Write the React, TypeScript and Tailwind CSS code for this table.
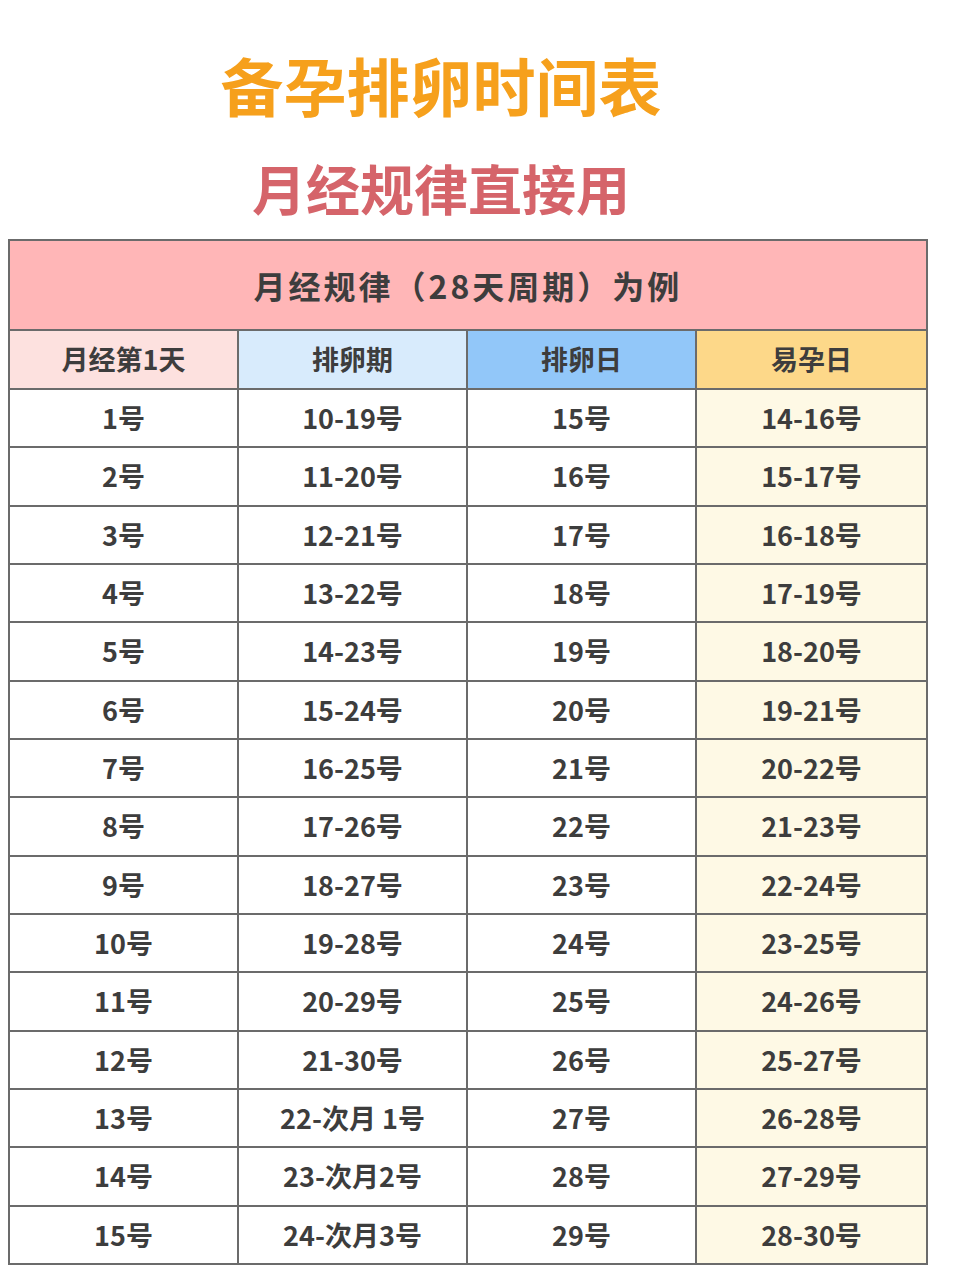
const rows: [string, string, string, string][] = [
  ['1号', '10-19号', '15号', '14-16号'],
  ['2号', '11-20号', '16号', '15-17号'],
  ['3号', '12-21号', '17号', '16-18号'],
  ['4号', '13-22号', '18号', '17-19号'],
  ['5号', '14-23号', '19号', '18-20号'],
  ['6号', '15-24号', '20号', '19-21号'],
  ['7号', '16-25号', '21号', '20-22号'],
  ['8号', '17-26号', '22号', '21-23号'],
  ['9号', '18-27号', '23号', '22-24号'],
  ['10号', '19-28号', '24号', '23-25号'],
  ['11号', '20-29号', '25号', '24-26号'],
  ['12号', '21-30号', '26号', '25-27号'],
  ['13号', '22-次月 1号', '27号', '26-28号'],
  ['14号', '23-次月2号', '28号', '27-29号'],
  ['15号', '24-次月3号', '29号', '28-30号'],
]

const font = { fontFamily: '"Noto Sans CJK SC", "Noto Sans", sans-serif' }

export default function App() {
  return (
    <div className="w-[967px] h-[1280px] bg-white text-[#3d3d3d]" style={font}>
      {/* titles */}
      <div className="w-[882px] pt-[52px] flex flex-col items-center">
        <h1 className="text-[63px] leading-none font-bold text-[#f6a01c]">备孕排卵时间表</h1>
        <h2 className="mt-[46px] text-[54px] leading-none font-bold text-[#d5646a]">月经规律直接用</h2>
      </div>

      {/* table */}
      <div className="mt-[24px] ml-[8px] w-[920px] border-2 border-[#6b6b6b]">
        <div className="h-[90px] bg-[#ffb6b7] border-b-2 border-[#6b6b6b] flex items-center justify-center">
          <span className="text-[32px] font-bold tracking-[3px]">月经规律（28天周期）为例</span>
        </div>

        <div className="grid grid-cols-4 h-[59px] border-b-2 border-[#6b6b6b] text-[27px] font-bold">
          <div className="bg-[#fde1df] border-r-2 border-[#6b6b6b] flex items-center justify-center">月经第1天</div>
          <div className="bg-[#d8ebfc] border-r-2 border-[#6b6b6b] flex items-center justify-center">排卵期</div>
          <div className="bg-[#92c7f9] border-r-2 border-[#6b6b6b] flex items-center justify-center">排卵日</div>
          <div className="bg-[#fdd889] flex items-center justify-center">易孕日</div>
        </div>

        <div className="h-[873px] flex flex-col text-[27px] font-bold">
          {rows.map((r, i) => (
            <div
              key={i}
              className={`flex-1 grid grid-cols-4 ${i < rows.length - 1 ? 'border-b-2 border-[#6b6b6b]' : ''}`}
            >
              <div className="border-r-2 border-[#6b6b6b] flex items-center justify-center">{r[0]}</div>
              <div className="border-r-2 border-[#6b6b6b] flex items-center justify-center">{r[1]}</div>
              <div className="border-r-2 border-[#6b6b6b] flex items-center justify-center">{r[2]}</div>
              <div className="bg-[#fef9e5] flex items-center justify-center">{r[3]}</div>
            </div>
          ))}
        </div>
      </div>
    </div>
  )
}
